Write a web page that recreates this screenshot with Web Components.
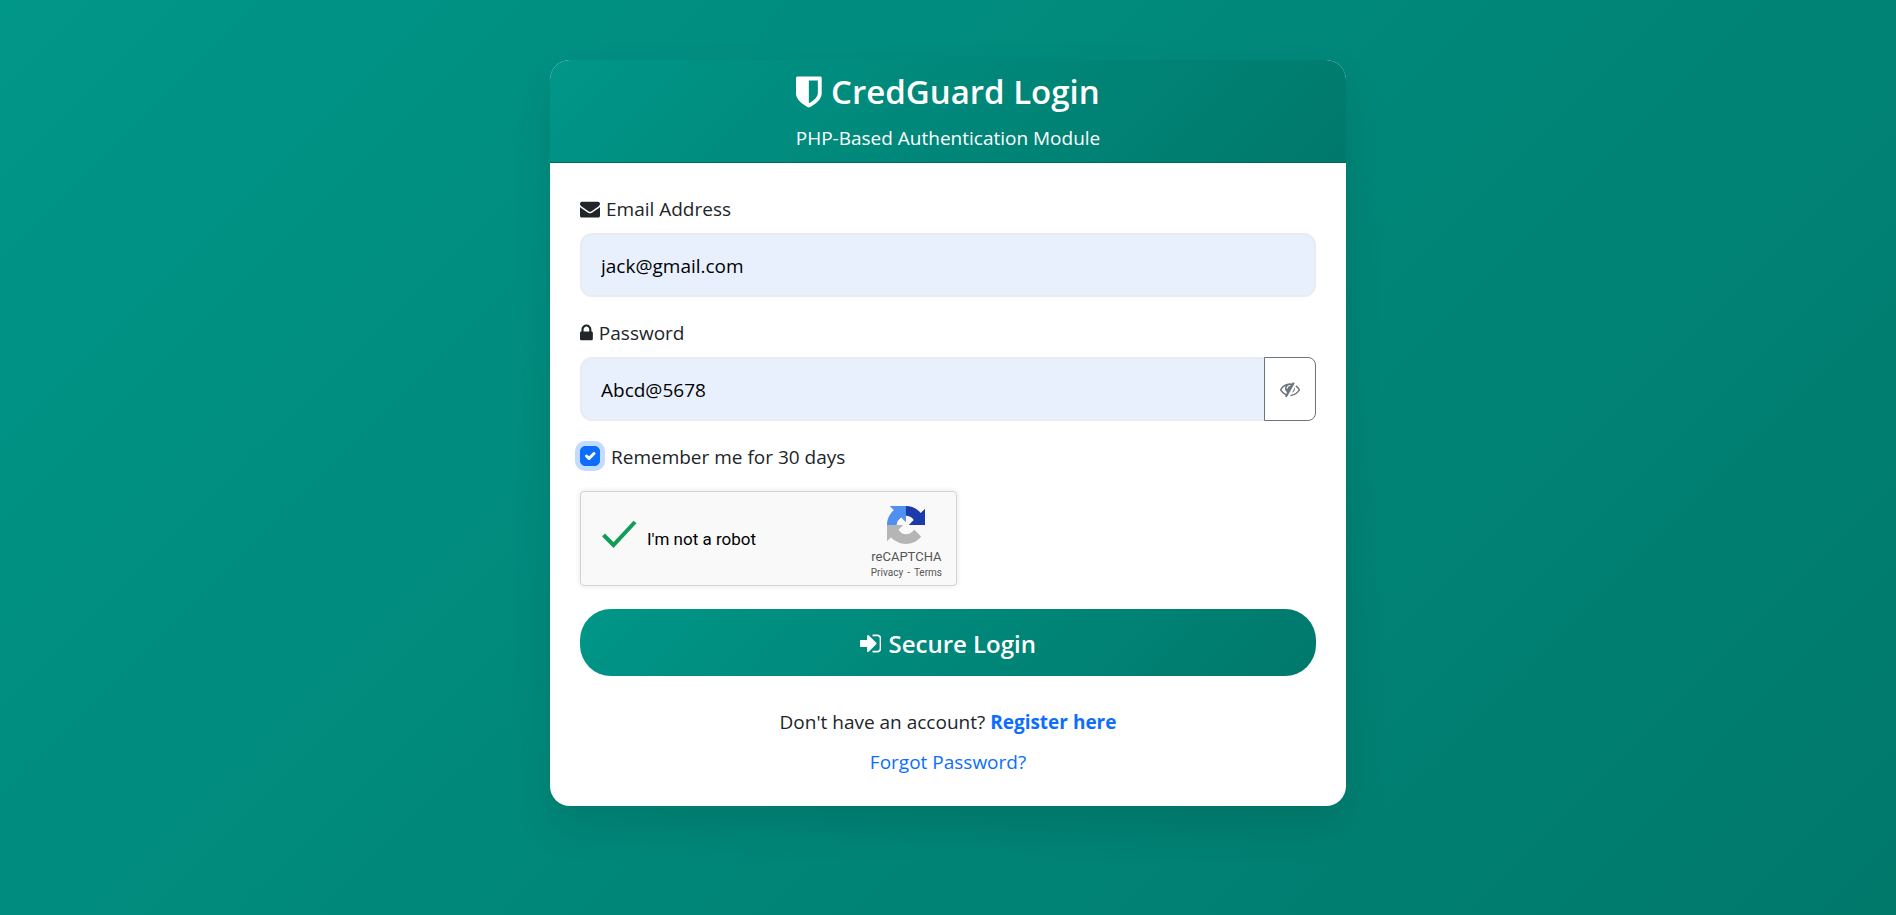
<!DOCTYPE html>
<html lang="en">
<head>
<meta charset="utf-8">
<meta name="viewport" content="width=device-width, initial-scale=1">
<title>CredGuard Login</title>
<style>
  body {
    margin: 0;
    font: 19px/32px "Open Sans", "Noto Sans", sans-serif;
    color: #212529;
  }
</style>
</head>
<body>
<login-page></login-page>

<script>
const ICONS = {
  shield: ['256 0 1280 1792', 'M1344 960v-640h-448v1137q119-63 213-137 235-184 235-360zm192-768v768q0 86-33.5 170.5t-83 150-118 127.5-126.5 103-121 77.5-89.5 49.5-42.5 20q-12 6-26 6t-26-6q-16-7-42.5-20t-89.5-49.5-121-77.5-126.5-103-118-127.5-83-150-33.5-170.5v-768q0-26 19-45t45-19h1152q26 0 45 19t19 45z'],
  envelope: ['0 0 1792 1792', 'M1792 710v794q0 66-47 113t-113 47h-1472q-66 0-113-47t-47-113v-794q44 49 101 87 362 246 497 345 57 42 92.5 65.5t94.5 48 110 24.5h2q51 0 110-24.5t94.5-48 92.5-65.5q170-123 498-345 57-39 100-87zm0-294q0 79-49 151t-122 123q-376 261-468 325-10 7-42.5 30.5t-54 38-52 32.5-57.5 27-50 9h-2q-23 0-50-9t-57.5-27-52-32.5-54-38-42.5-30.5q-91-64-262-182.5t-205-142.5q-62-42-117-115.5t-55-136.5q0-78 41.5-130t118.5-52h1472q65 0 112.5 47t47.5 113z'],
  lock: ['320 0 1152 1792', 'M640 768h512v-192q0-106-75-181t-181-75-181 75-75 181v192zm832 96v576q0 40-28 68t-68 28h-960q-40 0-68-28t-28-68v-576q0-40 28-68t68-28h32v-192q0-184 132-316t316-132 316 132 132 316v192h32q40 0 68 28t28 68z'],
  'sign-in': ['128 0 1536 1792', 'M1312 896q0 26-19 45l-544 544q-19 19-45 19t-45-19-19-45v-288h-448q-26 0-45-19t-19-45v-384q0-26 19-45t45-19h448v-288q0-26 19-45t45-19 45 19l544 544q19 19 19 45zm352-352v704q0 119-84.5 203.5t-203.5 84.5h-320q-13 0-22.5-9.5t-9.5-22.5q0-4-1-20t-.5-26.5 3-23.5 10-19.5 20.5-6.5h320q66 0 113-47t47-113v-704q0-66-47-113t-113-47h-312l-11.5-1-11.5-3-8-5.5-7-9-2-13.5q0-4-1-20t-.5-26.5 3-23.5 10-19.5 20.5-6.5h320q119 0 203.5 84.5t84.5 203.5z'],
  'eye-slash': ['0 0 1792 1792', 'M555 1335l78-141q-87-63-136-159t-49-203q0-121 61-225-229 117-381 353 167 258 427 375zm389-759q0-20-14-34t-34-14q-125 0-214.5 89.5t-89.5 214.5q0 20 14 34t34 14 34-14 14-34q0-86 61-147t147-61q20 0 34-14t14-34zm363-191q0 7-1 9-106 189-316 567t-315 566l-49 89q-10 16-28 16-12 0-134-70-16-10-16-28 0-12 44-87-143-65-263.5-173t-208.5-245q-20-31-20-69t20-69q153-235 380-371t496-136q89 0 180 17l54-97q10-16 28-16 5 0 18 6t31 15.5 33 18.5 31.5 18.5 19.5 11.5q16 10 16 27zm37 447q0 139-79 253.5t-209 164.5l280-502q8 45 8 84zm448 128q0 35-20 69-39 64-109 145-150 172-347.5 267t-419.5 95l74-132q212-18 392.5-137t301.5-307q-115-179-282-294l63-112q95 64 182.5 153t144.5 182q20 34 20 69z']
};

function define(name, render, setup) {
  customElements.define(name, class extends HTMLElement {
    connectedCallback() {
      if (this.shadowRoot) return;
      const t = document.createElement('template');
      t.innerHTML = '<style>*{box-sizing:border-box}</style>' + render(this);
      this.attachShadow({ mode: 'open' }).append(t.content.cloneNode(true));
      if (setup) setup(this, this.shadowRoot);
    }
  });
}

/* Glyph icon; --size is the height of its em box. */
define('fa-icon', el => {
  const [box, d] = ICONS[el.getAttribute('name')];
  return `<style>
    :host { display: inline-flex; flex: none; height: var(--size, 20px); }
    svg { display: block; height: 100%; width: auto; fill: currentColor; }
  </style><svg viewBox="${box}" aria-hidden="true"><path d="${d}"/></svg>`;
});

define('login-card', () => `<style>
  :host {
    display: block; width: 100%; max-width: 796px; border-radius: 20px;
    background: #fff; box-shadow: 0 20px 40px rgba(0, 0, 0, .1);
  }
  header {
    padding: 10px 20px 8px; text-align: center; color: #fff;
    border-bottom: 1px solid #00695c; border-radius: 20px 20px 0 0;
    background: linear-gradient(135deg, #009688, #00796b);
  }
  main { padding: 30px 30px 28px; }
</style><header><slot name="header"></slot></header><main><slot></slot></main>`);

define('card-title', () => `<style>
  :host { display: block; }
  h3 {
    --size: 36px; display: flex; justify-content: center; align-items: center; gap: 9px;
    margin: 0 0 8px; font-size: 33px; line-height: 44px; font-weight: 600;
  }
  p { margin: 0; }
</style><h3><fa-icon name="shield"></fa-icon><span><slot></slot></span></h3>
<p><slot name="subtitle"></slot></p>`);

define('text-field', el => `<style>
  :host { display: block; margin-bottom: 20px; }
  label { display: flex; align-items: center; gap: 6px; margin-bottom: 8px; }
  .group { display: flex; }
  input {
    flex: 1; min-width: 0; height: 64px; padding: 2px 19px 0; margin: 0;
    border: 2px solid #e9ecef; border-radius: 12px; background: #e8f0fe;
    color: #000; font: inherit; outline: none;
  }
</style>
<label for="field"><fa-icon name="${el.getAttribute('icon')}"></fa-icon><span>${el.getAttribute('label')}</span></label>
<div class="group"><input id="field" type="${el.getAttribute('type')}" value="${el.getAttribute('value')}"><slot name="addon"></slot></div>`);

define('password-toggle', () => `<style>
  :host { display: flex; flex: none; width: 52px; margin-left: -10px; position: relative; }
  button {
    display: flex; flex: 1; align-items: center; justify-content: center; padding: 0;
    border: 1px solid #6c757d; border-radius: 0 8px 8px 0; background: #fff; color: #6c757d;
  }
</style><button type="button" aria-label="Hide password"><fa-icon name="eye-slash"></fa-icon></button>`,
(el, root) => root.querySelector('button').addEventListener('click', () => {
  const input = el.closest('text-field').shadowRoot.querySelector('input');
  input.type = input.type === 'text' ? 'password' : 'text';
}));

define('check-field', () => `<style>
  :host { display: block; margin-bottom: 18px; }
  label { display: flex; align-items: flex-start; gap: 11px; }
  .box { display: grid; flex: none; width: 20px; height: 20px; margin-top: 5px; }
  input, svg { grid-area: 1 / 1; width: 20px; height: 20px; margin: 0; }
  input {
    appearance: none; border: 1px solid #dee2e6; border-radius: 5px; background: #fff;
    box-shadow: 0 0 0 5px rgba(13, 110, 253, .25);
  }
  input:checked { border-color: #0d6efd; background: #0d6efd; }
  svg { visibility: hidden; pointer-events: none; }
  input:checked + svg { visibility: visible; }
</style>
<label><span class="box"><input type="checkbox" checked><svg viewBox="0 0 20 20" fill="none" stroke="#fff" stroke-width="3" stroke-linecap="round" stroke-linejoin="round" aria-hidden="true"><path d="m6.500 10 2.500 2.500 5-5"/></svg></span><span><slot></slot></span></label>`);

define('captcha-box', () => `<style>
  :host {
    display: flex; align-items: stretch; justify-content: space-between;
    width: 377px; max-width: 100%; height: 95px; margin-bottom: 23px; padding: 0 14px 0 20px;
    border: 1px solid #d3d3d3; border-radius: 4px; background: #f9f9f9; color: #000;
    box-shadow: 0 0 5px 1px rgba(0, 0, 0, .08); font-family: Roboto, sans-serif;
  }
  label { display: flex; align-items: center; gap: 9px; font-size: 17px; line-height: 22px; }
  .tick { display: grid; width: 37px; height: 38px; margin-bottom: 10px; }
  input, .tick svg { grid-area: 1 / 1; width: 37px; height: 38px; margin: 0; }
  input { appearance: none; }
  aside {
    display: flex; flex-direction: column; align-items: center; padding-top: 14px;
    color: #555; font-size: 13px; line-height: 16px;
  }
  aside svg { width: 38px; height: 38px; margin-bottom: 5px; }
  small { display: flex; gap: 4px; font-size: 10px; line-height: 16px; }
  a { color: inherit; text-decoration: none; }
</style>
<label><span class="tick"><input type="checkbox" checked><svg viewBox="0 0 37 38" fill="none" stroke="#0f9d58" stroke-width="4" aria-hidden="true"><path d="M2.500 20l10 10L34 7"/></svg></span><span>I'm not a robot</span></label>
<aside>
<svg viewBox="0 0 64 64" aria-hidden="true">
<path d="M64 31.955l-.033-1.37V4.687l-7.16 7.16C50.948 4.674 42.033.093 32.05.093c-10.4 0-19.622 4.96-25.458 12.64l11.736 11.86a15.55 15.55 0 0 1 4.754-5.334c2.05-1.6 4.952-2.906 8.968-2.906.485 0 .86.057 1.135.163 4.976.393 9.288 3.14 11.828 7.124l-8.307 8.307L64 31.953" fill="#1c3aa9"/>
<path d="M31.862.094l-1.37.033H4.594l7.16 7.16C4.58 13.147 0 22.06 0 32.046c0 10.4 4.96 19.622 12.64 25.458L24.5 45.768a15.55 15.55 0 0 1-5.334-4.754c-1.6-2.05-2.906-4.952-2.906-8.968 0-.485.057-.86.163-1.135.393-4.976 3.14-9.288 7.124-11.828l8.307 8.307L31.86.095" fill="#5090f0"/>
<path d="M.001 32.045l.033 1.37v25.898l7.16-7.16c5.86 7.173 14.774 11.754 24.76 11.754 10.4 0 19.622-4.96 25.458-12.64l-11.736-11.86a15.55 15.55 0 0 1-4.754 5.334c-2.05 1.6-4.952 2.906-8.968 2.906-.485 0-.86-.057-1.135-.163-4.976-.393-9.288-3.14-11.828-7.124l8.307-8.307c-10.522.04-22.4.066-27.295-.005" fill="#b5b5b5"/>
</svg>
<span>reCAPTCHA</span>
<small><a href="#privacy">Privacy</a><span>-</span><a href="#terms">Terms</a></small>
</aside>`);

define('primary-button', el => `<style>
  :host { display: block; margin-bottom: 30px; }
  button {
    --size: 25px; display: flex; align-items: center; justify-content: center; gap: 7px;
    width: 100%; height: 67px; padding: 2px 0 0; border: 0; border-radius: 31px; color: #fff;
    font: 600 24px/38px "Open Sans", "Noto Sans", sans-serif;
    background: linear-gradient(135deg, #009688, #00796b);
  }
</style><button type="submit"><fa-icon name="${el.getAttribute('icon')}"></fa-icon><span><slot></slot></span></button>`);

define('card-links', () => `<style>
  :host { display: flex; flex-direction: column; gap: 8px; text-align: center; }
  p { margin: 0; }
  a { color: #0d6efd; text-decoration: none; }
  a.strong { font-weight: 700; }
</style>
<p>Don't have an account? <a class="strong" href="#register">Register here</a></p>
<p><a href="#forgot">Forgot Password?</a></p>`);

define('login-page', () => `<style>
  :host {
    display: flex; justify-content: center; align-items: flex-start;
    min-height: 100vh; padding: 60px 20px;
    background: linear-gradient(135deg, #009688, #00796b);
  }
  :host, :host * { box-sizing: border-box; }
  form { margin: 0; }
</style>
<login-card>
  <card-title slot="header">CredGuard Login<span slot="subtitle">PHP-Based Authentication Module</span></card-title>
  <form onsubmit="return false">
    <text-field icon="envelope" label="Email Address" type="email" value="jack@gmail.com"></text-field>
    <text-field icon="lock" label="Password" type="text" value="Abcd@5678"><password-toggle slot="addon"></password-toggle></text-field>
    <check-field>Remember me for 30 days</check-field>
    <captcha-box></captcha-box>
    <primary-button icon="sign-in">Secure Login</primary-button>
    <card-links></card-links>
  </form>
</login-card>`);
</script>
</body>
</html>
